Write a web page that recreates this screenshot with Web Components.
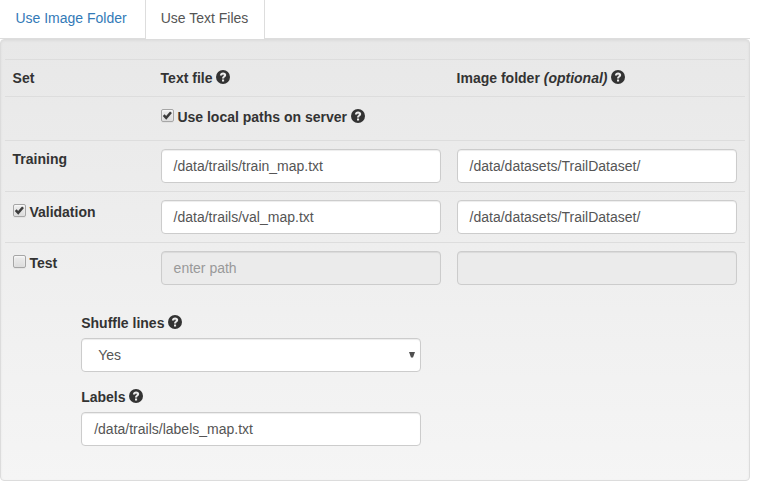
<!DOCTYPE html>
<html lang="en">
<head>
<meta charset="utf-8">
<title>Dataset text files</title>
<style>
html, body { margin: 0; background: #fff; }
body { font: 14px/20px "Liberation Sans", Arial, sans-serif; color: #333; width: 750px; }
</style>
</head>
<body>
<dataset-form></dataset-form>
<script>
function define(name, html) {
  const t = document.createElement('template');
  t.innerHTML = html;
  customElements.define(name, class extends HTMLElement {
    constructor() {
      super();
      this.attachShadow({ mode: 'open' }).appendChild(t.content.cloneNode(true));
    }
  });
}

define('nav-tab', `
<style>
:host { display: block; box-sizing: border-box; height: 39px; padding: 8px 15.6px 0 14.4px; margin-right: 2px;
  border: 1px solid transparent; border-width: 0 1px; color: #337ab7; cursor: pointer; white-space: nowrap; }
:host([active]) { color: #555; background: #fff; border-color: #ddd; margin-right: 0; }
</style><slot></slot>`);

define('nav-tabs', `
<style>
:host { display: flex; box-sizing: border-box; height: 39px; margin-left: 0; border-bottom: 1px solid #ddd; }
</style><slot></slot>`);

define('help-icon', `
<style>
:host { display: inline-block; width: 14px; height: 14px; position: relative; top: 1px; line-height: 1; }
svg { display: block; overflow: visible; }
</style>
<svg width="14" height="14" viewBox="0 0 14 14">
  <circle cx="7" cy="7" r="7" fill="#333"/>
  <path d="M3.9 5.6C4 3.5 5.3 2.5 7.1 2.5C8.9 2.5 10.2 3.5 10.2 5.1C10.2 7 8.1 7.1 8.1 8.4H6C6 6.5 7.8 6.3 7.8 5.3C7.8 4.7 7.5 4.4 7.1 4.4C6.5 4.4 6.2 4.8 6.1 5.6ZM6 9.4H8.1V11.5H6Z" fill="#ececec"/>
</svg>`);

define('check-box', `
<style>
:host { display: inline-block; box-sizing: border-box; width: 13px; height: 13px; margin-right: 3.8px;
  border: 1px solid #a6a6a6; border-radius: 2px; background: linear-gradient(#eee, #dcdcdc);
  box-shadow: inset 0 1px 2px rgba(255,255,255,.75), 0 1px 0 rgba(0,0,0,.04); vertical-align: 0; }
svg { display: none; }
:host([checked]) svg { display: block; }
</style>
<svg width="11" height="11" viewBox="0 0 11 11"><path d="M1.7 5.2L4.2 7.9L9 2.2" fill="none" stroke="#3c3c3c" stroke-width="2.5"/></svg>`);

define('text-field', `
<style>
:host { display: block; box-sizing: border-box; height: 34px; padding: 6px 12px; color: #555; background: #fff;
  border: 1px solid #ccc; border-radius: 4px; box-shadow: inset 0 1px 1px rgba(0,0,0,.075); white-space: nowrap; }
:host([disabled]) { background: #ebebeb; color: #999; }
</style><slot></slot>`);

define('select-field', `
<style>
:host { display: flex; justify-content: space-between; align-items: center; box-sizing: border-box; height: 34px;
  padding: 0 5px 0 16px; color: #555; background: #fff; border: 1px solid #ccc; border-radius: 4px;
  box-shadow: inset 0 1px 1px rgba(0,0,0,.075); }
</style><span><slot></slot></span>
<svg width="6" height="6" viewBox="0 0 6 6"><path d="M0 0H6L4 5.5H2Z" fill="#505050"/></svg>`);

define('table-row', `
<style>
:host { display: grid; grid-template-columns: 148px 296px 296px; box-sizing: border-box; height: 51px;
  padding: 8px 0; border-top: 1px solid #ddd; }
:host([kind=head]) { height: 37px; }
:host([kind=option]) { height: 44px; }
div { padding: 0 8.4px 0 7.6px; font-weight: bold; white-space: nowrap; }
::slotted(text-field) { font-weight: normal; }
::slotted(.lower) { display: block; padding-top: 2px; }
</style>
<div><slot name="set"></slot></div><div><slot name="file"></slot></div><div><slot name="folder"></slot></div>`);

define('form-group', `
<style>
:host { display: block; margin-bottom: 15px; }
label { display: block; margin-bottom: 5px; font-weight: bold; }
</style><label><slot name="label"></slot> <help-icon></help-icon></label><slot></slot>`);

define('well-panel', `
<style>
:host { display: block; box-sizing: border-box; height: 442px; padding: 19px 4px; border: 1px solid #dcdcdc;
  border-radius: 4px; background: linear-gradient(#e8e8e8, #f5f5f5);
  box-shadow: inset 0 1px 3px rgba(0,0,0,.05), 0 1px 0 rgba(255,255,255,.1); }
</style><slot></slot>`);

define('dataset-form', `
<style>
:host { display: block; }
.fields { width: 340px; margin: 20px 0 0 76.2px; }
em { font-style: italic; }
</style>
<nav-tabs><nav-tab>Use Image Folder</nav-tab><nav-tab active>Use Text Files</nav-tab></nav-tabs>
<well-panel>
  <table-row kind="head">
    <span slot="set">Set</span>
    <span slot="file">Text file <help-icon></help-icon></span>
    <span slot="folder">Image folder <em>(optional)</em> <help-icon></help-icon></span>
  </table-row>
  <table-row kind="option">
    <span slot="file" class="lower"><check-box checked></check-box>Use local paths on server <help-icon></help-icon></span>
  </table-row>
  <table-row>
    <span slot="set">Training</span>
    <text-field slot="file">/data/trails/train_map.txt</text-field>
    <text-field slot="folder">/data/datasets/TrailDataset/</text-field>
  </table-row>
  <table-row>
    <span slot="set" class="lower"><check-box checked></check-box>Validation</span>
    <text-field slot="file">/data/trails/val_map.txt</text-field>
    <text-field slot="folder">/data/datasets/TrailDataset/</text-field>
  </table-row>
  <table-row>
    <span slot="set" class="lower"><check-box></check-box>Test</span>
    <text-field slot="file" disabled>enter path</text-field>
    <text-field slot="folder" disabled></text-field>
  </table-row>
  <div class="fields">
    <form-group><span slot="label">Shuffle lines</span><select-field>Yes</select-field></form-group>
    <form-group><span slot="label">Labels</span><text-field>/data/trails/labels_map.txt</text-field></form-group>
  </div>
</well-panel>`);
</script>
</body>
</html>
